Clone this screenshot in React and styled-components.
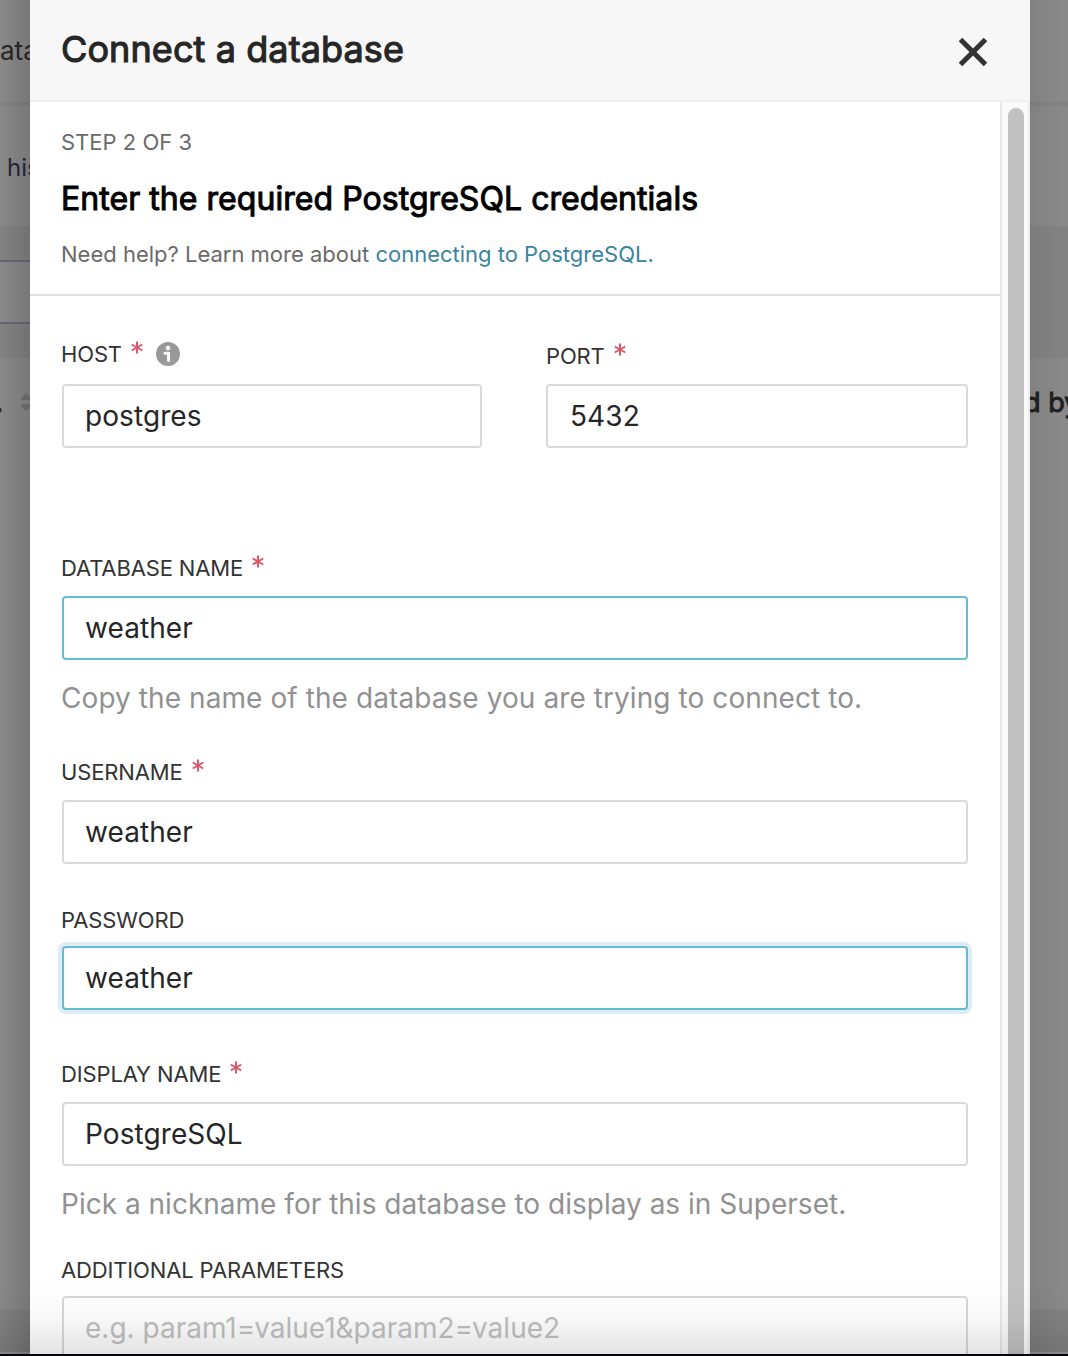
import React from "react";
import styled, { createGlobalStyle } from "styled-components";

const GlobalStyle = createGlobalStyle`
  * { box-sizing: border-box; }
  body {
    margin: 0;
    overflow: hidden;
    background: #888;
    font-family: Inter, "Liberation Sans", sans-serif;
    font-optical-sizing: none;
    font-weight: 370;
  }
`;

const Screen = styled.div`
  position: relative;
  display: grid;
  grid-template-columns: 30px 1000px 38px;
  width: 1068px;
  height: 1356px;
  overflow: hidden;
  border-bottom: 2px solid #050507;
`;

const Backdrop = styled.div`
  position: relative;
  display: flex;
  flex-direction: column;
  height: 1354px;
  overflow: hidden;
  white-space: nowrap;
  background: #898989;
  &::after {
    content: "";
    position: absolute;
    inset: 0;
    background: linear-gradient(${(p) => (p.$side === "left" ? "to left" : "to right")},
      rgba(0, 0, 0, ${(p) => (p.$side === "left" ? 0.13 : 0.06)}), rgba(0, 0, 0, 0) 30px);
  }
`;

const Band = styled.div`
  flex: none;
  display: flex;
  align-items: flex-start;
  height: ${(p) => p.$h}px;
  padding-top: ${(p) => p.$top || 0}px;
  background: ${(p) => p.$bg || "#898989"};
`;

const PageText = styled.span`
  font-size: ${(p) => p.$size || 24}px;
  line-height: 32px;
  color: ${(p) => p.$color || "#262626"};
  margin-left: ${(p) => p.$left || 0}px;
  -webkit-text-stroke: ${(p) => (p.$bold ? "1px" : "0")} currentColor;
`;

const SortIcon = styled.svg`
  flex: none;
  margin: 7px 0 0 ${(p) => p.$left}px;
`;

const Modal = styled.section`
  display: flex;
  flex-direction: column;
  height: 1354px;
  overflow: hidden;
  background: #fff;
`;

const Header = styled.header`
  flex: none;
  display: flex;
  justify-content: space-between;
  align-items: center;
  height: 102px;
  padding: 0 41px 0 31px;
  background: #f7f7f7;
  border-bottom: 2px solid #efefef;
`;

const Title = styled.h1`
  margin: 0 0 2px;
  font-size: 36px;
  font-weight: 400;
  line-height: 44px;
  letter-spacing: 0.1px;
  color: #262626;
  -webkit-text-stroke: 1.1px currentColor;
`;

const CloseButton = styled.button`
  display: flex;
  margin-top: 3px;
  padding: 0;
  border: 0;
  background: none;
`;

const Body = styled.div`
  flex: 1;
  min-height: 0;
  display: grid;
  grid-template-columns: 970px 30px;
`;

const Scroll = styled.div`
  min-height: 0;
  overflow: hidden;
`;

const Track = styled.div`
  padding: 6px 4px 0 6px;
  background: #fafafa;
  border-left: 2px solid #e8e8e8;
  border-right: 2px solid #ececec;
`;

const Thumb = styled.div`
  width: 16px;
  height: 1300px;
  border-radius: 8px;
  background: #c1c1c1;
`;

const Intro = styled.div`
  height: 194px;
  padding: 26px 31px 0;
  border-bottom: 2px solid #e0e0e0;
`;

const Step = styled.p`
  margin: 0;
  font-size: 22px;
  line-height: 28px;
  color: #6a6a6a;
`;

const Heading = styled.h2`
  margin: 21px 0 0;
  font-size: 32px;
  font-weight: 400;
  line-height: 44px;
  letter-spacing: 0.05px;
  color: #000;
  white-space: nowrap;
  -webkit-text-stroke: 1px currentColor;
`;

const Help = styled.p`
  margin: 19px 0 0;
  font-size: 22px;
  line-height: 28px;
  color: #6a6a6a;
`;

const Link = styled.a`
  color: #3a849e;
`;

const Form = styled.form`
  padding: 43px 32px 0;
`;

const Row = styled.div`
  display: grid;
  grid-template-columns: 420px 422px;
  column-gap: 64px;
  margin-bottom: 105px;
`;

const FieldBox = styled.div`
  margin-bottom: ${(p) => p.$gap || 0}px;
`;

const Label = styled.label`
  display: flex;
  align-items: center;
  height: 30px;
  margin: ${(p) => p.$top || 0}px 0 ${(p) => p.$bottom}px ${(p) => p.$left ?? -1}px;
  font-size: 22px;
  line-height: 30px;
  letter-spacing: -0.14px;
  color: #333;
  white-space: nowrap;
`;

const Required = styled.svg`
  flex: none;
  margin: -13px 0 0 9px;
`;

const InfoIcon = styled.svg`
  flex: none;
  margin-left: 13px;
`;

const Input = styled.input`
  display: block;
  width: 100%;
  height: 64px;
  padding: 0 22px 0 ${(p) => p.$indent ?? 21}px;
  border: 2px solid ${(p) => (p.$active ? "#66bcd4" : "#d9d9d9")};
  border-radius: 4px;
  outline: 0;
  box-shadow: ${(p) => (p.$focused ? "0 0 0 4px #dcedf3" : "none")};
  background: #fff;
  font: 370 28px/40px Inter, "Liberation Sans", sans-serif;
  font-optical-sizing: none;
  letter-spacing: 0.08px;
  color: #262626;
  &::placeholder { color: #c0c0c0; opacity: 1; letter-spacing: 0; }
`;

const Hint = styled.p`
  margin: 18px 0 0 -1px;
  font-size: 28px;
  line-height: 40px;
  letter-spacing: ${(p) => p.$ls}px;
  color: #919191;
  white-space: nowrap;
`;

const BottomShade = styled.div`
  position: absolute;
  left: 0;
  right: 0;
  bottom: 0;
  height: 70px;
  background: linear-gradient(to bottom, rgba(0, 0, 0, 0), rgba(0, 0, 0, 0.03) 50%, rgba(0, 0, 0, 0.11));
`;

const Star = () => (
  <Required width="12" height="14" viewBox="0 0 12 14" fill="none" stroke="#d9596a" strokeWidth="2">
    <path d="M6 0.5V12.500M0.7 3.500L11.300 9.500M11.300 3.500L0.7 9.500" />
  </Required>
);

function Field({ label, required, info, value, placeholder, active, focused, hint, hintSpacing = 0.08, gap, top, bottom = 13, left, indent }) {
  return (
    <FieldBox $gap={gap}>
      <Label $top={top} $bottom={bottom} $left={left}>
        {label}
        {required && <Star />}
        {info && (
          <InfoIcon width="24" height="24" viewBox="0 0 24 24">
            <circle cx="12" cy="12" r="12" fill="#999" />
            <circle cx="12" cy="6" r="2.2" fill="#fff" />
            <path d="M9 11.200H12.600V18.500" fill="none" stroke="#fff" strokeWidth="3" strokeLinecap="round" strokeLinejoin="round" />
          </InfoIcon>
        )}
      </Label>
      <Input defaultValue={value} placeholder={placeholder} $active={active} $focused={focused} $indent={indent} />
      {hint && <Hint $ls={hintSpacing}>{hint}</Hint>}
    </FieldBox>
  );
}

export default function App() {
  return (
    <>
      <GlobalStyle />
      <Screen>
        <Backdrop $side="left">
          <Band $h={102} $top={35}><PageText $size={26}>ata</PageText></Band>
          <Band $h={4} $bg="#828282" />
          <Band $h={120} $top={46}><PageText $left={7} $color="#25263c">his</PageText></Band>
          <Band $h={34} $bg="#828282" />
          <Band $h={2} $bg="#666879" />
          <Band $h={60} />
          <Band $h={2} $bg="#666879" />
          <Band $h={34} $bg="#828282" />
          <Band $h={952} $top={28}>
            <PageText $size={28} $left={-5} $bold>.</PageText>
            <SortIcon $left={18} width="12" height="18" viewBox="0 0 12 18" fill="#727272">
              <path d="M0 6L4 1Q5 0 6 1L11 6V7H0zM0 11H11V12L6 17Q5 18 4 17L0 13z" />
            </SortIcon>
          </Band>
          <Band $h={42} $bg="#828282" />
          <Band $h={2} $bg="#999" />
        </Backdrop>
        <Modal>
          <Header>
            <Title>Connect a database</Title>
            <CloseButton type="button" aria-label="Close">
              <svg width="32" height="32" viewBox="0 0 32 32" fill="none" stroke="#333" strokeWidth="5" strokeLinejoin="round">
                <path d="M3.500 3.500L28.500 28.500M28.500 3.500L3.500 28.500" />
              </svg>
            </CloseButton>
          </Header>
          <Body>
            <Scroll>
              <Intro>
                <Step>STEP 2 OF 3</Step>
                <Heading>Enter the required PostgreSQL credentials</Heading>
                <Help>Need help? Learn more about <Link>connecting to PostgreSQL.</Link></Help>
              </Intro>
              <Form>
                <Row>
                  <Field label="HOST" required info value="postgres" bottom={15} />
                  <Field label="PORT" required value="5432" top={2} left={0} indent={22} />
                </Row>
                <Field label="DATABASE NAME" required value="weather" active gap={39}
                  hint="Copy the name of the database you are trying to connect to." />
                <Field label="USERNAME" required value="weather" gap={41} />
                <Field label="PASSWORD" value="weather" active focused gap={49} bottom={11} />
                <Field label="DISPLAY NAME" required value="PostgreSQL" gap={31} hintSpacing={0.01}
                  hint="Pick a nickname for this database to display as in Superset." />
                <Field label="ADDITIONAL PARAMETERS" placeholder="e.g. param1=value1&param2=value2" bottom={11} />
              </Form>
            </Scroll>
            <Track><Thumb /></Track>
          </Body>
        </Modal>
        <Backdrop $side="right">
          <Band $h={102} />
          <Band $h={4} $bg="#828282" />
          <Band $h={120} />
          <Band $h={132} $bg="#828282" />
          <Band $h={952} $top={29}><PageText $size={27} $left={-6} $color="#202020" $bold>d by</PageText></Band>
          <Band $h={42} $bg="#828282" />
          <Band $h={2} $bg="#999" />
        </Backdrop>
        <BottomShade />
      </Screen>
    </>
  );
}
